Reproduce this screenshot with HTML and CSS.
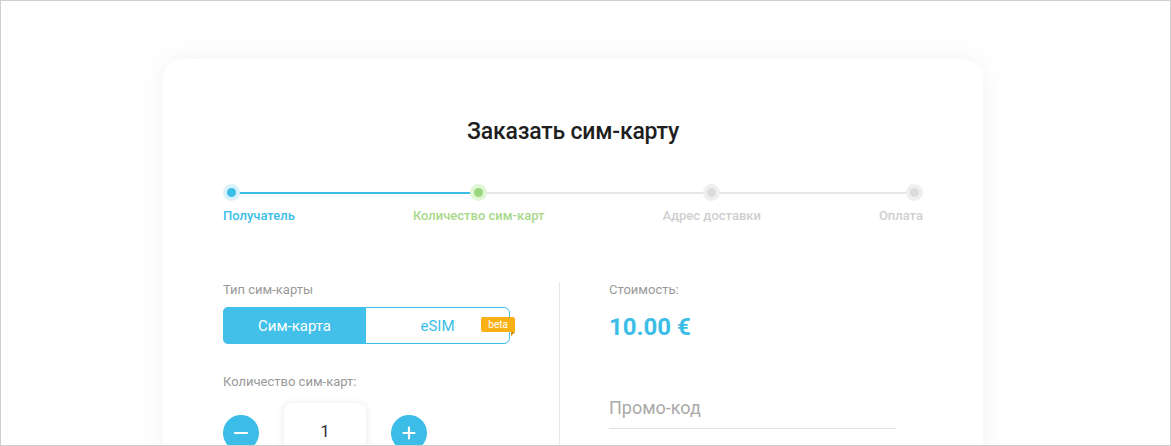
FILE: index.html
```html
<!DOCTYPE html>
<html lang="ru">
<head>
<meta charset="utf-8">
<title>Заказать сим-карту</title>
<link rel="stylesheet" href="styles.css">
</head>
<body>
<div class="frame">
  <div class="card">
    <h1 class="title">Заказать сим-карту</h1>

    <div class="stepper">
      <div class="track"><div class="track-fill" style="width:249px"></div></div>
      <div class="step step-first done">
        <span class="dot"></span>
        <span class="step-label">Получатель</span>
      </div>
      <div class="step step-mid current">
        <span class="dot"></span>
        <span class="step-label">Количество сим-карт</span>
      </div>
      <div class="step step-mid">
        <span class="dot"></span>
        <span class="step-label">Адрес доставки</span>
      </div>
      <div class="step step-last">
        <span class="dot"></span>
        <span class="step-label">Оплата</span>
      </div>
    </div>

    <div class="columns">
      <div class="col-left">
        <div class="field-label">Тип сим-карты</div>
        <div class="toggle">
          <button class="toggle-opt active">Сим-карта</button>
          <button class="toggle-opt">eSIM</button>
          <span class="badge">beta</span>
        </div>

        <div class="field-label qty-label">Количество сим-карт:</div>
        <div class="qty">
          <button class="round-btn" aria-label="minus">
            <svg width="14" height="14" viewBox="0 0 14 14"><path d="M1 7h12" stroke="#fff" stroke-width="2.2" stroke-linecap="round"/></svg>
          </button>
          <div class="qty-box">1</div>
          <button class="round-btn" aria-label="plus">
            <svg width="14" height="14" viewBox="0 0 14 14"><path d="M1.5 7h11M7 1.5v11" stroke="#fff" stroke-width="2.2" stroke-linecap="round"/></svg>
          </button>
        </div>
      </div>

      <div class="col-right">
        <div class="field-label">Стоимость:</div>
        <div class="price">10.00 €</div>
        <div class="promo">Промо-код</div>
      </div>
    </div>
  </div>
</div>
</body>
</html>
```

FILE: styles.css
```css
* { box-sizing: border-box; }
html, body { margin: 0; padding: 0; background: #fff; }
body { font-family: "Roboto", "Liberation Sans", sans-serif; }

.frame {
  width: 1171px;
  height: 446px;
  border: 1px solid #cfcfcf;
  overflow: hidden;
  padding: 58px 0 0 162px;
}

.card {
  width: 820px;
  height: 460px;
  background: #fff;
  border-radius: 20px;
  box-shadow: 0 0 28px rgba(0, 0, 0, 0.055);
  padding: 58px 60px 0 60px;
}

.title {
  margin: 0;
  text-align: center;
  font-size: 23px;
  font-weight: 500;
  color: #1f1f1f;
  line-height: 30px;
  letter-spacing: -0.2px;
}

.stepper {
  position: relative;
  display: flex;
  justify-content: space-between;
  margin-top: 37px;
}
.track {
  position: absolute;
  left: 8px;
  right: 8px;
  top: 8px;
  height: 2px;
  background: #e6e6e6;
}
.track-fill { height: 2px; background: #3bbde8; }

.step {
  position: relative;
  display: flex;
  flex-direction: column;
  align-items: center;
}
.step-first { align-items: flex-start; }
.step-last { align-items: flex-end; }

.dot {
  width: 17px;
  height: 17px;
  border-radius: 50%;
  background: #efefef;
  display: flex;
  align-items: center;
  justify-content: center;
}
.dot::after {
  content: "";
  width: 9px;
  height: 9px;
  border-radius: 50%;
  background: #dcdcdc;
}
.step-first .dot { margin-left: -0.5px; }
.done .dot { background: #d8f2fc; }
.done .dot::after { background: #3bbde8; }
.current .dot { background: #e0f6d6; }
.current .dot::after { background: #9bd67e; }

.step-label {
  margin-top: 7px;
  font-size: 13px;
  font-weight: 500;
  color: #cfcfcf;
  line-height: 16px;
}
.done .step-label { color: #3bbde8; }
.current .step-label { color: #a8d98a; }

.columns {
  display: flex;
  margin-top: 58px;
}
.col-left {
  width: 337px;
  padding-right: 50px;
  border-right: 1px solid #e8e8e8;
  height: 200px;
}
.col-right {
  padding-left: 49px;
  width: 336px;
}

.field-label {
  font-size: 13px;
  color: #999;
  line-height: 16px;
}

.toggle {
  position: relative;
  margin-top: 9px;
  display: flex;
  height: 37px;
  width: 287px;
  border: 1px solid #3bbde8;
  border-radius: 6px;
}
.toggle-opt {
  flex: 1;
  border: 0;
  background: transparent;
  font-family: inherit;
  font-size: 15px;
  color: #3bbde8;
  padding: 0;
  cursor: pointer;
}
.toggle-opt.active {
  background: #42c0ea;
  color: #fff;
  border-radius: 5px 0 0 5px;
  margin: -1px 0 -1px -1px;
}
.badge {
  position: absolute;
  right: -6px;
  top: 9px;
  background: #fbb116;
  color: #fff;
  font-size: 10px;
  line-height: 15px;
  padding: 0 7px;
  border-radius: 2px 2px 0 2px;
}
.badge::after {
  content: "";
  position: absolute;
  right: 0;
  bottom: -4px;
  border-top: 4px solid #c98a0c;
  border-right: 4px solid transparent;
}

.qty-label { margin-top: 30px; }
.qty {
  display: flex;
  align-items: flex-start;
  gap: 25px;
  margin-top: 13px;
}
.round-btn {
  width: 36px;
  height: 36px;
  border-radius: 50%;
  border: 0;
  padding: 0;
  background: #3bbde8;
  display: flex;
  align-items: center;
  justify-content: center;
  margin-top: 12px;
}
.qty-box {
  width: 82px;
  height: 56px;
  border-radius: 8px;
  background: #fff;
  box-shadow: 0 1px 8px rgba(0, 0, 0, 0.1);
  text-align: center;
  font-size: 17px;
  color: #333;
  padding-top: 18px;
  line-height: 20px;
}

.price {
  margin-top: 14px;
  font-size: 24px;
  font-weight: 700;
  color: #3bbde8;
  line-height: 30px;
}
.promo {
  margin-top: 54px;
  width: 287px;
  font-size: 18px;
  color: #aaa;
  line-height: 24px;
  padding-bottom: 8px;
  border-bottom: 1px solid #e3e3e3;
}
```
